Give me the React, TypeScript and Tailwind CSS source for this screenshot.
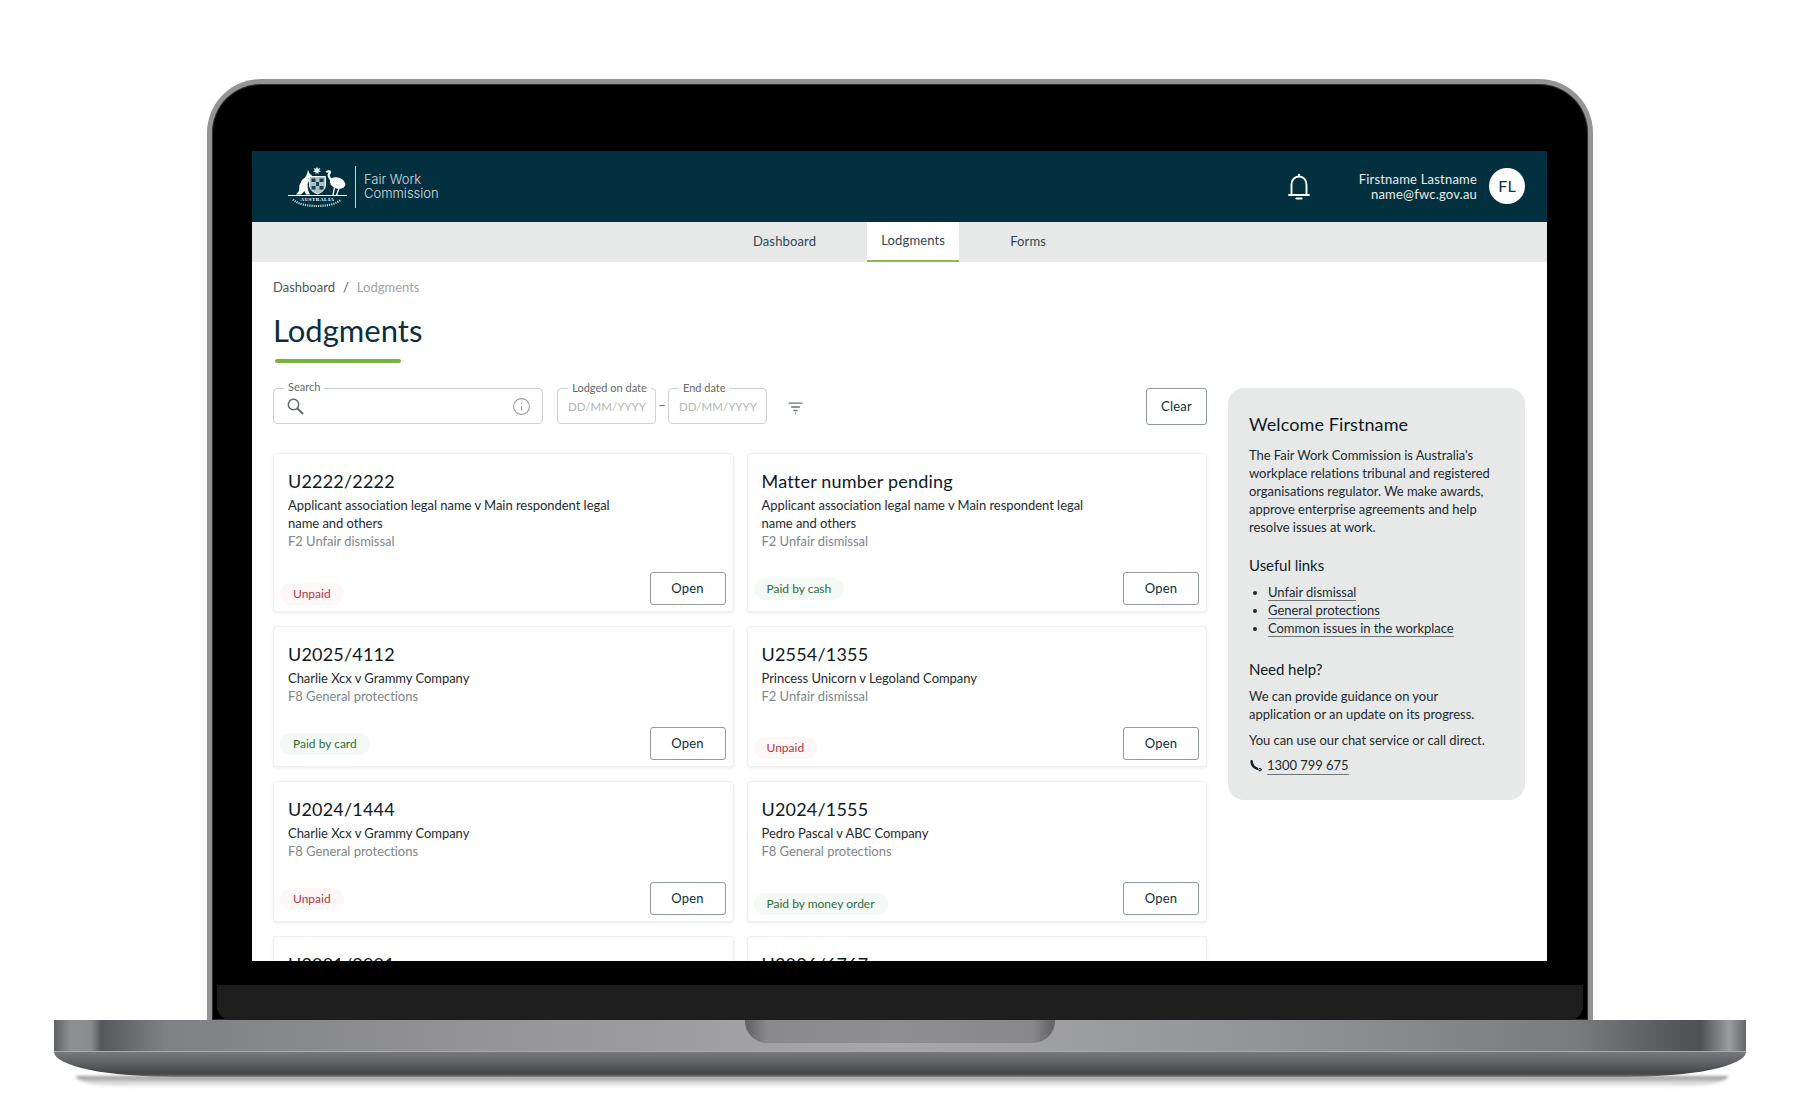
import React from "react";
import { Info } from "lucide-react";

function Crest() {
  return (
    <svg width="59" height="42" viewBox="0 0 59 42" fill="none">
      <path d="M29 0.5l1 2.200 2.400-.6-1.200 2.100 1.800 1.600-2.400.3-.3 2.400-1.300-1.900-1.300 1.900-.3-2.400-2.400-.3 1.800-1.600-1.200-2.100 2.400.6z" fill="#fff" opacity="0.9" />
      <path d="M20 4L21.500 7.500L24 9.500L22 11L20.500 12L21 15L19.500 18L20 24L22 28.500L18 28.500L16.500 25L13 28.500L8 28.500L11 25L11.500 19L14 14L17.500 11L19 8Z" fill="#fff" />
      <path d="M40 5.500c2.200-.6 2.800 1.400 1.200 2-1 1-.4 3.500 1.800 6.500" stroke="#fff" strokeWidth="2.200" strokeLinecap="round" />
      <path d="M38.500 5.800l2-.6" stroke="#fff" strokeWidth="1.600" strokeLinecap="round" />
      <ellipse cx="49.500" cy="17" rx="8" ry="5.500" transform="rotate(20 49.500 17)" fill="#fff" />
      <path d="M42 13c1-.8 3-1 4.500-.4L46 20c-2.400-1.400-4-4.200-4-7z" fill="#fff" />
      <path d="M46.500 21.500L45 29M51 22.500L48.500 29" stroke="#fff" strokeWidth="1.300" />
      <path d="M21.500 10.500h16v8.500c0 4.500-4 7.500-8 9-4-1.500-8-4.500-8-9z" fill="#aebfc4" stroke="#fff" strokeWidth="0.900" />
      <path d="M23.500 12.500h4v3.500h-4zM31.500 12.500h4v3.500h-4zM23.500 20h4v3.500h-4zM31.500 20h4v3.500h-4zM28 16h3v4h-3z" fill="#13414f" />
      <path d="M0 29.500h59" stroke="#fff" strokeWidth="1" />
      <text x="29.500" y="34.600" textAnchor="middle" fontSize="5" fontWeight="700" fill="#fff" fontFamily="'Liberation Serif', serif" letterSpacing="0.500">AUSTRALIA</text>
      <path d="M5 33.500c5 5 15 6.500 24 6.500s19-1.500 24-6.500" stroke="#fff" strokeWidth="2.200" strokeDasharray="1.200 1" opacity="0.75" />
    </svg>
  );
}

function Bell() {
  return (
    <svg width="22" height="28" viewBox="0 0 22 28" fill="none" stroke="#fff" strokeWidth="1.900" strokeLinecap="round" strokeLinejoin="round">
      <path d="M3.500 21.500V11.500C3.500 7 6.500 3.500 11 3.500s7.500 3.500 7.500 8.500v9.500" />
      <path d="M1 22h20" />
      <path d="M8.500 25.500h5" strokeWidth="2.200" />
      <path d="M11 1.800v1" strokeWidth="2.200" />
    </svg>
  );
}

function Phone() {
  return (
    <svg width="13" height="13" viewBox="0 0 13 13" fill="none" stroke="#10222a" strokeLinecap="round">
      <path d="M2.600 2.200C2.800 5.800 5.200 8.600 8 9.700" strokeWidth="2.500" />
      <circle cx="11" cy="10.700" r="1.300" strokeWidth="1" />
    </svg>
  );
}

function SearchGlyph() {
  return (
    <svg width="17" height="17" viewBox="0 0 17 17" fill="none" stroke="#5e6b70" strokeLinecap="round" className="mt-[1px]">
      <circle cx="6.500" cy="6.500" r="5.200" strokeWidth="1.500" />
      <path d="M10.500 10.500L15.500 15.500" strokeWidth="2" />
    </svg>
  );
}

function FilterGlyph() {
  return (
    <svg width="15" height="12" viewBox="0 0 15 12" fill="none" stroke="#6b7477" strokeWidth="1.300" strokeLinecap="round">
      <path d="M1 1.200h13" />
      <path d="M3.500 5h8" />
      <path d="M6 8.500h3" />
      <path d="M7.500 11.200h.1" />
    </svg>
  );
}

function Pill({ kind, text, top }: { kind: "red" | "green"; text: string; top: string }) {
  const tone = kind === "red" ? "bg-[#fdf7f7] text-[#b3343f]" : "bg-[#f5f9f5] text-[#2f6b3a]";
  return <span className={`${top} h-[22px] rounded-full px-[13px] text-[12px] leading-[22px] ${tone}`}>{text}</span>;
}

type CardData = {
  no: string;
  lines: string[];
  type: string;
  kind: "red" | "green";
  status: string;
  top: string;
  rowH: string;
};

function Card({ no, lines, type, kind, status, top, rowH }: CardData) {
  return (
    <div className={`${rowH} flex flex-col justify-between rounded-[4px] border border-[#efefef] bg-white pt-[15px] pr-[7px] pb-[6px] pl-[6px] shadow-[0_1px_3px_rgba(0,0,0,0.08)]`}>
      <div className="pl-[8px]">
        <div className="text-[18px] leading-[24px] tracking-[0.2px] text-[#0f1a1f]">{no}</div>
        <div className="mt-[3px] text-[13px] leading-[18px] tracking-[-0.04px] text-[#1d2a30]">
          {lines.map((l) => (
            <div key={l}>{l}</div>
          ))}
        </div>
        <div className="text-[13px] leading-[18px] tracking-[-0.04px] text-[#7e8689]">{type}</div>
      </div>
      <div className="flex items-start justify-between">
        <Pill kind={kind} text={status} top={top} />
        <button className="h-[33px] w-[76px] rounded-[3px] border border-[#8f9a9d] bg-white text-[13px] tracking-[0.2px] text-[#0d2e3c]">Open</button>
      </div>
    </div>
  );
}

function CutCard({ no }: { no: string }) {
  return (
    <div className="h-[141px] rounded-[4px] border border-[#efefef] bg-white pt-[15px] pl-[14px] shadow-[0_1px_3px_rgba(0,0,0,0.08)]">
      <div className="text-[18px] leading-[24px] tracking-[0.2px] text-[#0f1a1f]">{no}</div>
    </div>
  );
}

const long = ["Applicant association legal name v Main respondent legal", "name and others"];

const cards: CardData[] = [
  { no: "U2222/2222", lines: long, type: "F2 Unfair dismissal", kind: "red", status: "Unpaid", top: "mt-[11px]", rowH: "h-[159px]" },
  { no: "Matter number pending", lines: long, type: "F2 Unfair dismissal", kind: "green", status: "Paid by cash", top: "mt-[6px]", rowH: "h-[159px]" },
  { no: "U2025/4112", lines: ["Charlie Xcx v Grammy Company"], type: "F8 General protections", kind: "green", status: "Paid by card", top: "mt-[6px]", rowH: "h-[141px]" },
  { no: "U2554/1355", lines: ["Princess Unicorn v Legoland Company"], type: "F2 Unfair dismissal", kind: "red", status: "Unpaid", top: "mt-[10px]", rowH: "h-[141px]" },
  { no: "U2024/1444", lines: ["Charlie Xcx v Grammy Company"], type: "F8 General protections", kind: "red", status: "Unpaid", top: "mt-[6px]", rowH: "h-[141px]" },
  { no: "U2024/1555", lines: ["Pedro Pascal v ABC Company"], type: "F8 General protections", kind: "green", status: "Paid by money order", top: "mt-[11px]", rowH: "h-[141px]" },
];

function DateBox({ label, labelW }: { label: string; labelW: string }) {
  return (
    <div className="relative h-[36px] w-[99px] rounded-[4px] border border-[#cfd2d3] pt-[9px] pl-[10px] text-[11.500px] leading-[18px] text-[#b3b6b7]">
      <span className={`absolute top-[-8px] left-[10px] ${labelW} bg-white px-[4px] text-center text-[11px] leading-[14px] whitespace-nowrap text-[#5f686b]`}>{label}</span>
      DD/MM/YYYY
    </div>
  );
}

function LinkText({ children }: { children: React.ReactNode }) {
  return <span className="border-b border-[#6e7679]">{children}</span>;
}

function Screen() {
  return (
    <div className="h-[810px] w-[1295px] overflow-hidden bg-white font-['Lato',sans-serif]">
      <header className="flex h-[71px] items-center justify-between bg-[#03303e] pr-[22px] pl-[36px]">
        <div className="flex items-center">
          <Crest />
          <div className="mx-[8px] h-[42px] w-px bg-[#c4d0d4]" />
          <div className="font-['Inter',sans-serif] text-[13px] leading-[13.500px] font-light text-[#d5dfe2]">
            <div>Fair Work</div>
            <div>Commission</div>
          </div>
        </div>
        <div className="flex items-center">
          <Bell />
          <div className="mr-[12px] ml-[49px] text-right text-[13px] leading-[15px] tracking-[0.2px] text-[#e6ecee]">
            <div>Firstname Lastname</div>
            <div>name@fwc.gov.au</div>
          </div>
          <div className="mt-[-1px] flex h-[36px] w-[36px] items-center justify-center rounded-full bg-white text-[16px] text-[#0d2e3c]">FL</div>
        </div>
      </header>

      <nav className="flex h-[40px] items-stretch justify-center gap-[37px] bg-[#e6e9e8] text-[13px] tracking-[0.15px] text-[#2f4650]">
        <div className="flex items-center px-[14px]">Dashboard</div>
        <div className="flex items-center border-b-[2px] border-[#86bb4e] bg-white px-[14px]">Lodgments</div>
        <div className="flex items-center px-[14px]">Forms</div>
      </nav>

      <div className="flex gap-[21px] pr-[22px] pl-[21px]">
        <main className="w-[934px] shrink-0">
          <div className="pt-[16px] text-[13px] leading-[18px] text-[#4d5659]">
            Dashboard<span className="mx-[8px]">/</span>
            <span className="text-[#9da3a5]">Lodgments</span>
          </div>
          <h1 className="mt-[14px] text-[31px] leading-[40px] text-[#0d2e3c]">Lodgments</h1>
          <div className="mt-[9px] ml-[2px] h-[4px] w-[126px] rounded-full bg-[#79b33f]" />

          <div className="mt-[25px] flex items-start">
            <div className="relative flex h-[36px] w-[270px] items-center justify-between rounded-[4px] border border-[#cfd2d3] pr-[11px] pl-[13px]">
              <span className="absolute top-[-9px] left-[10px] bg-white px-[4px] text-[11px] leading-[14px] text-[#5f686b]">Search</span>
              <SearchGlyph />
              <Info size={19} strokeWidth={1.400} className="text-[#9a9fa1]" />
            </div>
            <div className="ml-[14px] flex items-start">
              <DateBox label="Lodged on date" labelW="w-[83px]" />
              <div className="w-[12px] pt-[8px] text-center text-[13px] leading-[18px] text-[#5f686b]">–</div>
              <DateBox label="End date" labelW="w-[50px]" />
            </div>
            <div className="ml-[21px] pt-[14px]">
              <FilterGlyph />
            </div>
            <button className="ml-auto h-[37px] w-[61px] rounded-[3px] border border-[#8f9a9d] bg-white text-[13px] tracking-[0.2px] text-[#0d2e3c]">Clear</button>
          </div>

          <div className="mt-[28px] grid grid-cols-2 gap-x-[13px] gap-y-[14px]">
            {cards.map((c) => (
              <Card key={c.no} {...c} />
            ))}
            <CutCard no="U2001/2001" />
            <CutCard no="U2026/6767" />
          </div>
        </main>

        <aside className="mt-[126px] h-[412px] w-[297px] shrink-0 rounded-[16px] bg-[#e6e9e8] pt-[24px] pr-[22px] pl-[21px] text-[13px] leading-[18px] tracking-[-0.04px] text-[#1d2a30]">
          <h2 className="text-[18px] leading-[24px] tracking-[0.1px] text-[#0f1a1f]">Welcome Firstname</h2>
          <p className="mt-[10px]">
            The Fair Work Commission is Australia's
            <br />
            workplace relations tribunal and registered
            <br />
            organisations regulator. We make awards,
            <br />
            approve enterprise agreements and help
            <br />
            resolve issues at work.
          </p>
          <h3 className="mt-[19px] text-[15px] leading-[20px] text-[#0f1a1f]">Useful links</h3>
          <ul className="mt-[8px] list-disc pl-[19px]">
            <li><LinkText>Unfair dismissal</LinkText></li>
            <li><LinkText>General protections</LinkText></li>
            <li><LinkText>Common issues in the workplace</LinkText></li>
          </ul>
          <h3 className="mt-[22px] text-[15px] leading-[20px] text-[#0f1a1f]">Need help?</h3>
          <p className="mt-[8px]">
            We can provide guidance on your
            <br />
            application or an update on its progress.
          </p>
          <p className="mt-[8px]">You can use our chat service or call direct.</p>
          <div className="mt-[7px] flex items-center gap-[5px]">
            <Phone />
            <LinkText>1300 799 675</LinkText>
          </div>
        </aside>
      </div>
    </div>
  );
}

export default function App() {
  return (
    <div className="h-[1112px] w-[1800px] overflow-hidden bg-white pt-[79px]">
      <div className="ml-[207px] flex h-[941px] w-[1386px] flex-col rounded-t-[54px] border-[5px] border-b-0 border-[#949494] bg-black shadow-[inset_0_0_0_1px_#2c2c2c]">
        <div className="flex flex-1 justify-start pt-[67px] pl-[40px]">
          <Screen />
        </div>
        <div className="mx-[5px] h-[35px] rounded-b-[14px] bg-[#1e1e1e]" />
      </div>

      <div className="relative ml-[54px] w-[1692px]">
        <div className="h-[31px] bg-[linear-gradient(90deg,#5f6063_0%,#8e8f91_1%,#8a8b8d_2.200%,#56575a_2.800%,#7f8083_6.500%,#949497_25%,#a8a8ab_50%,#929396_72%,#7a7b7d_90%,#55565a_96%,#4f5053_97.300%,#9c9da0_99%,#66676a_100%)]" />
        <div className="h-[1px] bg-[#a9aaad]" />
        <div className="h-[25px] rounded-b-[120px_25px] bg-[linear-gradient(180deg,#77787b_0%,#5f6063_45%,#3a3b3d_100%)]" />
        <div className="absolute top-0 left-[691px] h-[23px] w-[310px] rounded-b-[22px] bg-[linear-gradient(90deg,#5e5f62_0%,#8a8a8d_7%,#8e8e90_50%,#88888a_93%,#5e5f62_100%)]" />
      </div>
      <div className="mt-[-1px] ml-[76px] h-[12px] w-[1652px] rounded-b-[60px_12px] bg-[linear-gradient(180deg,#8f8f8f_0%,#cfcfcf_45%,#ffffff_100%)] blur-[1.500px]" />
    </div>
  );
}
